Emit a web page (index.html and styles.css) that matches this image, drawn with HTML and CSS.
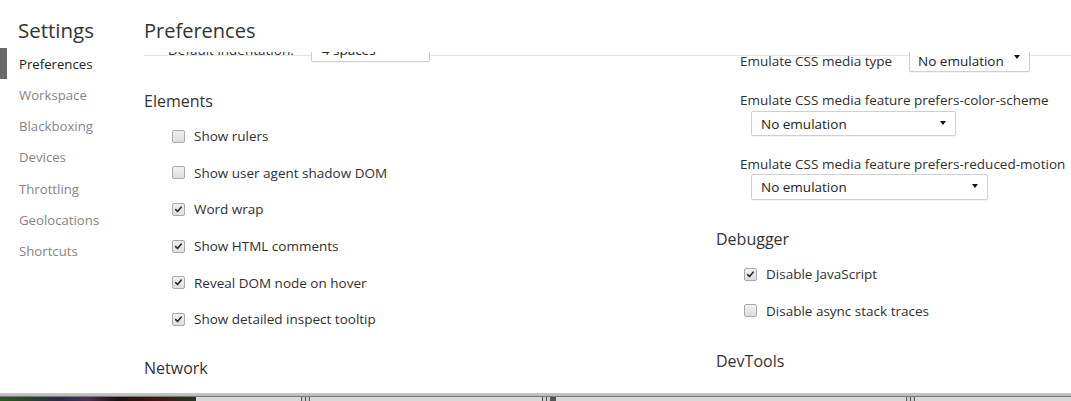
FILE: index.html
```html
<!DOCTYPE html>
<html lang="en">
<head>
<meta charset="utf-8">
<title>Settings - Preferences</title>
<link rel="stylesheet" href="styles.css">
</head>
<body>
<div class="app">
  <aside class="sidebar">
    <h1 class="sb-title">Settings</h1>
    <nav class="tabs">
      <div class="tab active">Preferences</div>
      <div class="tab">Workspace</div>
      <div class="tab">Blackboxing</div>
      <div class="tab">Devices</div>
      <div class="tab">Throttling</div>
      <div class="tab">Geolocations</div>
      <div class="tab">Shortcuts</div>
    </nav>
  </aside>
  <main class="pane">
    <h2 class="pane-title">Preferences</h2>
    <div class="scroller">
      <div class="columns">
        <div class="col col-left">
          <div class="field-row partial">
            <span class="field-label">Default indentation:</span>
            <span class="select sel-indent"><span class="sel-text">4 spaces</span><span class="caret"></span></span>
          </div>
          <section class="block">
            <h3 class="block-title">Elements</h3>
            <ul class="checks">
              <li class="check-row"><span class="cb"></span>Show rulers</li>
              <li class="check-row"><span class="cb"></span>Show user agent shadow DOM</li>
              <li class="check-row"><span class="cb on"><svg viewBox="0 0 13 13"><path d="M3.2 6.6 L5.4 8.9 L9.8 3.6" /></svg></span>Word wrap</li>
              <li class="check-row"><span class="cb on"><svg viewBox="0 0 13 13"><path d="M3.2 6.6 L5.4 8.9 L9.8 3.6" /></svg></span>Show HTML comments</li>
              <li class="check-row"><span class="cb on"><svg viewBox="0 0 13 13"><path d="M3.2 6.6 L5.4 8.9 L9.8 3.6" /></svg></span>Reveal DOM node on hover</li>
              <li class="check-row"><span class="cb on"><svg viewBox="0 0 13 13"><path d="M3.2 6.6 L5.4 8.9 L9.8 3.6" /></svg></span>Show detailed inspect tooltip</li>
            </ul>
          </section>
          <section class="block block-next">
            <h3 class="block-title">Network</h3>
          </section>
        </div>
        <div class="col col-right">
          <div class="field-row first-right">
            <span class="field-label">Emulate CSS media type</span>
            <span class="select sel-media"><span class="sel-text">No emulation</span><span class="caret"></span></span>
          </div>
          <div class="field-stack">
            <span class="field-label">Emulate CSS media feature prefers-color-scheme</span>
            <span class="select sel-scheme"><span class="sel-text">No emulation</span><span class="caret"></span></span>
          </div>
          <div class="field-stack">
            <span class="field-label">Emulate CSS media feature prefers-reduced-motion</span>
            <span class="select sel-motion"><span class="sel-text">No emulation</span><span class="caret"></span></span>
          </div>
          <section class="block block-debugger">
            <h3 class="block-title">Debugger</h3>
            <ul class="checks">
              <li class="check-row"><span class="cb on"><svg viewBox="0 0 13 13"><path d="M3.2 6.6 L5.4 8.9 L9.8 3.6" /></svg></span>Disable JavaScript</li>
              <li class="check-row"><span class="cb"></span>Disable async stack traces</li>
            </ul>
          </section>
          <section class="block block-next block-devtools">
            <h3 class="block-title">DevTools</h3>
          </section>
        </div>
      </div>
    </div>
  </main>
</div>
<div class="shadow-line"></div>
<div class="taskbar">
  <div class="thumb"></div>
  <div class="tb-gap g1"></div>
  <div class="ticks"></div>
  <div class="tb-gap g2"></div>
  <div class="ticks wide"></div>
  <div class="tb-gap g3"></div>
  <div class="ticks"></div>
  <div class="tb-gap fill"></div>
</div>
</body>
</html>
```
FILE: styles.css
```css
* { box-sizing: border-box; }
html, body { margin: 0; padding: 0; }
body {
  width: 1071px;
  height: 401px;
  overflow: hidden;
  background: #fff;
  font-family: "Open Sans", "Noto Sans", "DejaVu Sans", sans-serif;
  font-size: 13.5px;
  color: #303030;
}
.app {
  display: flex;
  height: 393px;
  background: #fff;
}
.sidebar {
  width: 144px;
  flex: none;
}
.sb-title {
  margin: 0;
  height: 48px;
  padding: 17px 0 0 18px;
  font-size: 20.5px;
  line-height: 26px;
  font-weight: 400;
  color: #333;
}
.tabs { display: flex; flex-direction: column; }
.tab {
  height: 31.17px;
  line-height: 31.17px;
  padding-top: 1px;
  padding-left: 19px;
  font-size: 13.2px;
  color: #858585;
  position: relative;
}
.tab.active { color: #222; }
.tab.active::before {
  content: "";
  position: absolute;
  left: 0; top: 0; bottom: 0;
  width: 7px;
  background: #6b6b6b;
}
.pane {
  flex: 1;
  display: flex;
  flex-direction: column;
  min-width: 0;
}
.pane-title {
  margin: 0;
  height: 56px;
  padding: 18px 0 0 0;
  font-size: 20px;
  line-height: 26px;
  font-weight: 400;
  color: #333;
  border-bottom: 1px solid #e4e4e4;
}
.scroller {
  flex: 1;
  overflow: hidden;
  margin-top: -4px;
  position: relative;
  z-index: 1;
}
.columns {
  display: grid;
  grid-template-columns: 572px 355px;
  align-items: start;
}
.col { display: flex; flex-direction: column; }
.field-row {
  display: flex;
  align-items: center;
  padding-left: 24px;
  height: 23px;
}
.partial { margin-top: -15px; height: 25px; }
.first-right { margin-top: -3px; }
.field-label { white-space: nowrap; color: #303030; }
.select {
  position: relative;
  display: flex;
  align-items: center;
  border: 1px solid #cfcfcf;
  border-radius: 2px;
  background: #fff;
  color: #222;
  box-shadow: 0 1px 0 rgba(0,0,0,0.04);
}
.sel-text { white-space: nowrap; }
.caret {
  position: absolute;
  top: 50%;
  right: 9px;
  margin-top: -3px;
  width: 0; height: 0;
  border-left: 3.5px solid transparent;
  border-right: 3.5px solid transparent;
  border-top: 4px solid #111;
}
.sel-indent {
  margin-left: 17px;
  width: 119px;
  height: 25px;
  padding-left: 10px;
}
.sel-media {
  margin-left: 17px;
  width: 121px;
  height: 23px;
  padding-left: 8px;
}
.sel-media .caret { margin-top: -6px; }
.field-stack {
  display: flex;
  flex-direction: column;
  align-items: flex-start;
  padding-left: 24px;
  margin-top: 19px;
}
.field-stack .field-label { line-height: 18px; }
.sel-scheme {
  margin: 2px 0 0 11px;
  width: 205px;
  height: 25px;
  padding-left: 9px;
}
.sel-motion {
  margin: 1px 0 0 11px;
  width: 237px;
  height: 26px;
  padding-left: 9px;
}
.block { display: flex; flex-direction: column; }
.block-title {
  margin: 0;
  font-size: 16px;
  line-height: 22px;
  font-weight: 400;
  color: #333;
}
.col-left > .block:first-of-type { margin-top: 28px; }
.block-debugger { margin-top: 28px; }
.block-next { margin-top: 19.6px; }
.block-devtools { margin-top: 20.6px; }
.checks {
  list-style: none;
  margin: 0;
  padding: 6px 0 0 0;
}
.check-row {
  height: 36.6px;
  display: flex;
  align-items: center;
  padding-left: 28px;
  color: #303030;
  white-space: nowrap;
}
.cb {
  flex: none;
  width: 13px;
  height: 13px;
  margin-right: 9px;
  border: 1px solid #a9a9a9;
  border-radius: 2px;
  background: linear-gradient(#f1f1f1, #dedede);
  display: flex;
}
.cb svg { width: 11px; height: 11px; }
.cb svg path {
  fill: none;
  stroke: #2a2a2a;
  stroke-width: 1.9;
  stroke-linecap: round;
  stroke-linejoin: round;
}
.shadow-line {
  height: 3px;
  background: linear-gradient(#c9c9c9, #b8b8b8);
}
.taskbar {
  height: 5px;
  display: flex;
  border-top: 1px solid #7a7a7a;
  background: #d9d9d9;
}
.thumb {
  width: 196px;
  background: linear-gradient(90deg, #2c5a18 0%, #2a2a48 30%, #4a3050 45%, #1a1210 60%, #4a1214 80%, #1e3a24 100%);
}
.tb-gap { background: #d9d9d9; }
.g1 { width: 105px; }
.g2 { width: 232px; }
.g3 { width: 350px; }
.fill { flex: 1; }
.ticks {
  width: 9px;
  background: linear-gradient(90deg, #555 0 1px, #ccc 1px 4px, #555 4px 5px, #ccc 5px 8px, #555 8px 9px);
}
.ticks.wide { width: 14px; }
```
